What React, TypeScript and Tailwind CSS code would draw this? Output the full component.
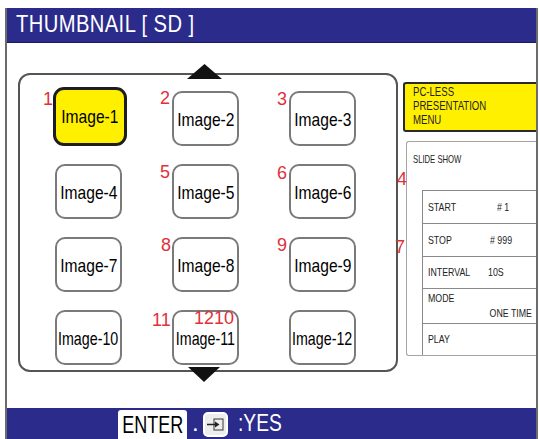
const sans = "font-['Liberation_Sans',Arial,sans-serif]";

const thumbs = [
  "Image-1", "Image-2", "Image-3",
  "Image-4", "Image-5", "Image-6",
  "Image-7", "Image-8", "Image-9",
  "Image-10", "Image-11", "Image-12",
];

// callout numbers placed over the screen
const callouts = [
  { n: "1", x: 43, y: 90 },
  { n: "2", x: 160, y: 89 },
  { n: "3", x: 277, y: 90 },
  { n: "5", x: 160, y: 163 },
  { n: "6", x: 277, y: 164 },
  { n: "8", x: 161, y: 236 },
  { n: "9", x: 277, y: 236 },
  { n: "11", x: 152, y: 311 },
  { n: "1210", x: 194, y: 309 },
  { n: "4", x: 397, y: 170 },
  { n: "7", x: 395, y: 238 },
];

function Thumb({ label, selected }: { label: string; selected?: boolean }) {
  const squeeze = label.length > 7 ? "scale-x-[0.75]" : "scale-x-[0.82]";
  if (selected) {
    return (
      <div className="-ml-[2px] -mr-[5px] -mt-[4px] flex items-center justify-center rounded-[11px] border-[3px] border-[#1e1e1e] bg-[#fff000]">
        <span className={`${sans} inline-block whitespace-nowrap text-[19px] leading-none text-black ${squeeze}`}>{label}</span>
      </div>
    );
  }
  return (
    <div className="flex items-center justify-center rounded-[10px] border-2 border-[#7a7a7a] bg-white pt-[2px]">
      <span className={`${sans} inline-block whitespace-nowrap text-[19px] leading-none text-black ${squeeze}`}>{label}</span>
    </div>
  );
}

function Txt({ children, right, tight }: { children: React.ReactNode; right?: boolean; tight?: boolean }) {
  return (
    <span
      className={`inline-block whitespace-nowrap ${tight ? "scale-x-[0.7]" : "scale-x-[0.8]"} ${right ? "origin-right" : "origin-left"}`}
    >
      {children}
    </span>
  );
}

function Row({ label, value, pad }: { label: string; value: string; pad: string }) {
  return (
    <div className="flex items-center border-l border-t border-[#8a8a8a] pl-[5px] h-full">
      <span className="w-[60px]"><Txt>{label}</Txt></span>
      <span className={pad}><Txt>{value}</Txt></span>
    </div>
  );
}

function InputIcon() {
  return (
    <svg width="25" height="25" viewBox="0 0 25 25">
      <rect x="1" y="1" width="23" height="23" rx="4" fill="#ededed" stroke="#ffffff" strokeWidth="2" />
      <rect x="11" y="7" width="9" height="11" fill="none" stroke="#555" strokeWidth="1.2" />
      <line x1="4" y1="12.5" x2="13" y2="12.5" stroke="#222" strokeWidth="1.5" />
      <polygon points="12,9.5 16.5,12.5 12,15.5" fill="#222" />
    </svg>
  );
}

export default function App() {
  return (
    <div className="relative w-[540px] h-[439px] bg-white overflow-hidden">
      <div className="ml-[5px] mt-[8px] w-[533px] h-[431px] flex flex-col border-x-2 border-[#6b6b6b]">
        {/* title bar */}
        <div className="h-[35px] bg-[#2b2b8c] border-b border-[#1c1c5c] pl-[9px] pt-[4px]">
          <span className={`${sans} inline-block origin-left scale-x-[0.84] whitespace-nowrap text-[24px] leading-none text-white tracking-[0.5px]`}>
            THUMBNAIL [ SD ]
          </span>
        </div>

        <div className="flex-1 flex">
          {/* thumbnail panel */}
          <div className="relative ml-[11px] mt-[30px] w-[380px] h-[299px] rounded-[12px] border-2 border-[#555]">
            <svg className="absolute left-[167px] -top-[11px]" width="35" height="15" viewBox="0 0 35 15">
              <polygon points="17.5,0 35,15 0,15" fill="#111" />
            </svg>
            <div className="grid grid-cols-[repeat(3,67px)] grid-rows-[repeat(4,55px)] gap-x-[50px] gap-y-[18px] pl-[35px] pt-[16px]">
              {thumbs.map((t, i) => (
                <Thumb key={t} label={t} selected={i === 0} />
              ))}
            </div>
            <svg className="absolute left-[168px] top-[292px]" width="32" height="15" viewBox="0 0 32 15">
              <polygon points="0,0 32,0 16,15" fill="#111" />
            </svg>
          </div>

          {/* right menu column */}
          <div className={`${sans} ml-[5px] flex-1 flex flex-col text-[#222]`}>
            <div className="mt-[39px] h-[50px] rounded-l-[3px] border-2 border-r-0 border-[#2a2a2a] bg-[#fff000] pl-[8px] pt-[1px] text-[12px] leading-[14px]">
              <div><Txt>PC-LESS</Txt></div>
              <div><Txt>PRESENTATION</Txt></div>
              <div><Txt>MENU</Txt></div>
            </div>
            <div className="mt-[9px] ml-[3px] h-[215px] flex flex-col rounded-l-[3px] border-[1.5px] border-r-0 border-[#a5a5a5] text-[11px] leading-[13px]">
              <div className="pl-[6px] pt-[11px] h-[48px]"><Txt tight>SLIDE SHOW</Txt></div>
              <div className="ml-[15px] flex-1 grid grid-rows-[33px_33px_32px_35px_1fr]">
                <Row label="START" value="# 1" pad="pl-[9px]" />
                <Row label="STOP" value="# 999" pad="pl-[2px]" />
                <Row label="INTERVAL" value="10S" pad="" />
                <div className="flex flex-col border-l border-t border-[#8a8a8a] pl-[5px] pr-[4px] pt-[3px] h-full">
                  <span><Txt>MODE</Txt></span>
                  <span className="self-end mt-[2px]"><Txt right>ONE TIME</Txt></span>
                </div>
                <div className="flex items-center border-l border-t border-[#8a8a8a] pl-[5px]"><Txt>PLAY</Txt></div>
              </div>
            </div>
          </div>
        </div>

        {/* footer bar */}
        <div className={`${sans} h-[31px] bg-[#2b2b8c] flex items-end text-[24px] leading-none`}>
          <div className="ml-[111px] w-[69px] h-[29px] rounded-t-[3px] bg-white flex items-center justify-center text-black">
            <span className="inline-block scale-x-[0.75]">ENTER</span>
          </div>
          <span className="ml-[5px] mb-[4px] text-white">.</span>
          <div className="ml-[4px] mb-[2px]">
            <InputIcon />
          </div>
          <span className="ml-[10px] mb-[4px] inline-block origin-left scale-x-[0.8] text-white">:YES</span>
        </div>
      </div>

      <div className="pointer-events-none absolute inset-0">
        {callouts.map((c) => (
          <span
            key={c.n}
            className={`${sans} absolute text-[18px] leading-none text-[#e0303a]`}
            style={{ left: c.x, top: c.y }}
          >
            {c.n}
          </span>
        ))}
      </div>
    </div>
  );
}
